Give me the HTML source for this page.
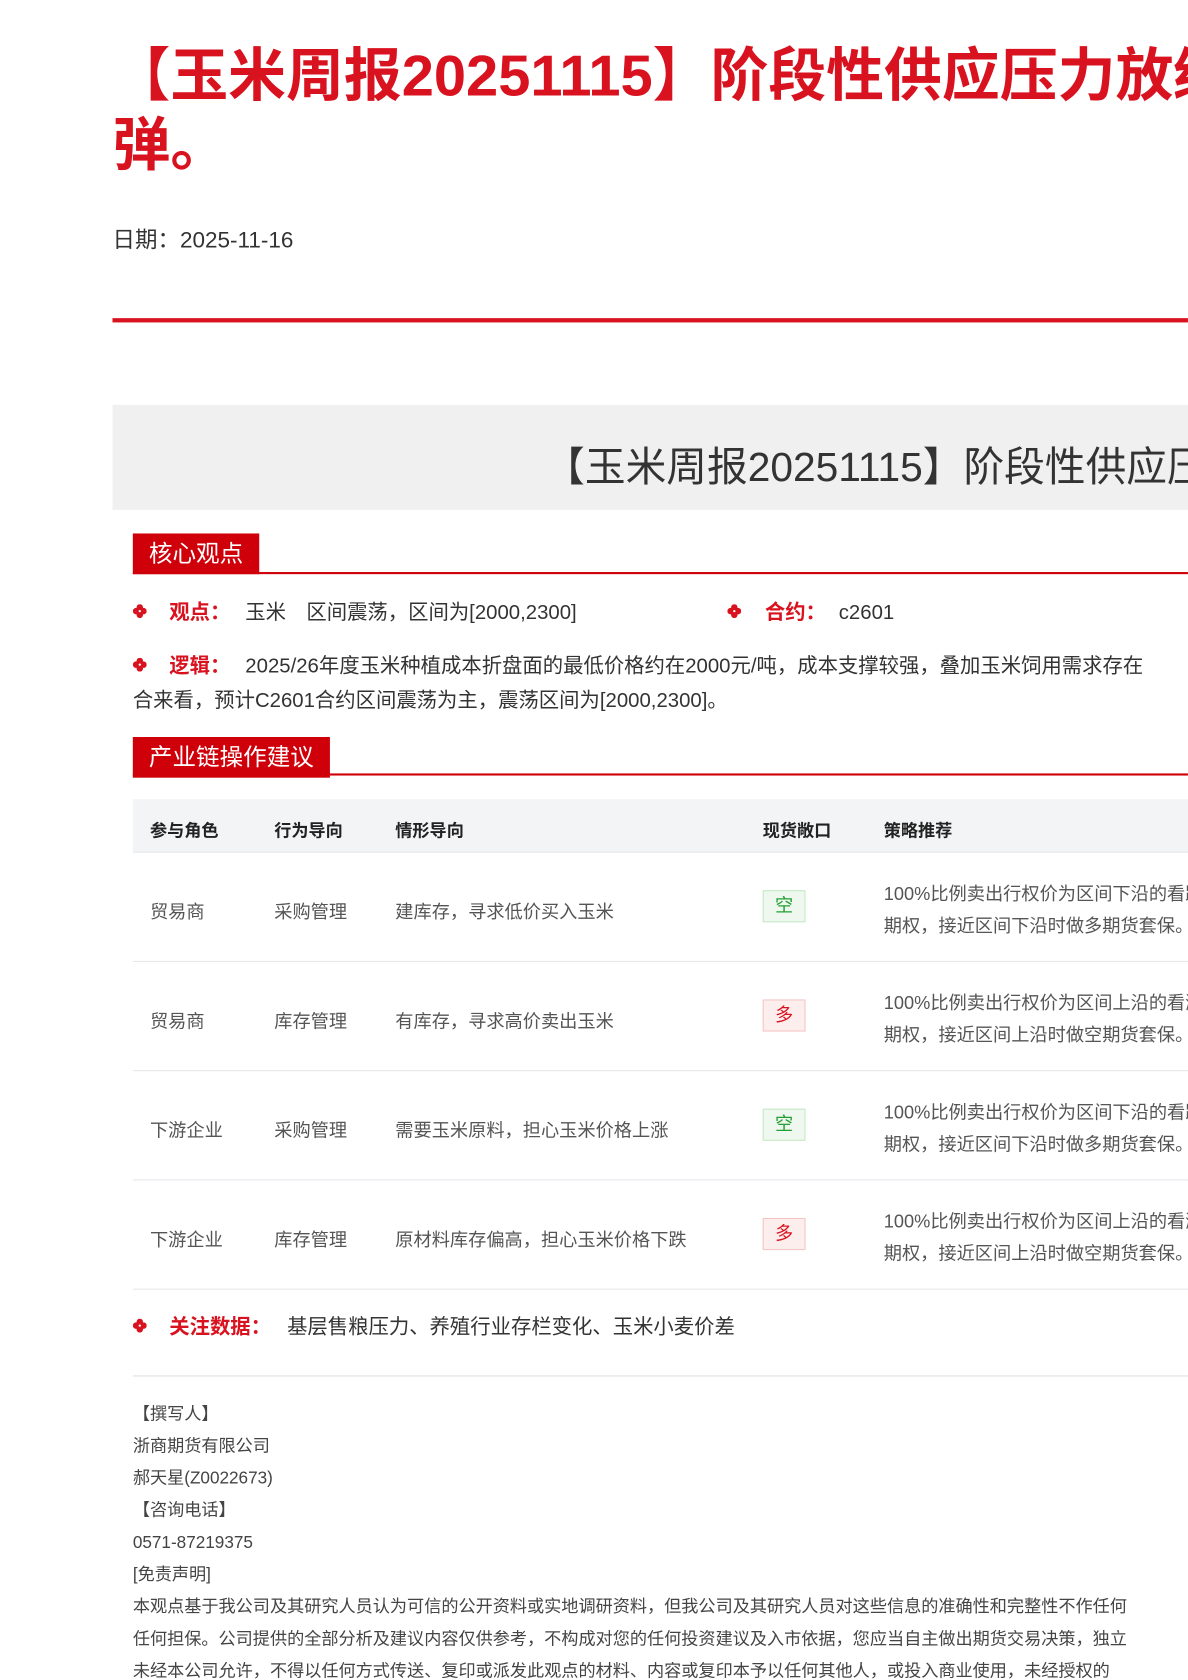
<!DOCTYPE html>
<html><head><meta charset="utf-8"><style>
*{margin:0;padding:0;box-sizing:border-box}
html,body{width:1188px;height:1680px;overflow:hidden;background:#fff}
body{font-family:"Liberation Sans","Noto Sans CJK SC",sans-serif;color:#333}
#w{position:relative;width:1109px;height:1568px;transform:scale(1.0712);transform-origin:0 0}
.a{position:absolute;white-space:nowrap}
.t{font-size:54px;font-weight:bold;color:#d9121f;line-height:72px;left:105px}
.red{color:#d9121f;font-weight:bold}
.sec{position:absolute;left:124px;height:38px;background:#d0000a;color:#fff;font-size:22px;line-height:38px;padding:0 15px}
.secl{position:absolute;left:124px;right:0;height:2px;background:#d0000a}
.b{font-size:19px;line-height:30px}
.bul{display:inline-block;width:13px;height:13px;vertical-align:1px}
.th{position:absolute;left:124px;right:0;top:746px;height:50px;background:#f3f4f6;border-bottom:1px solid #e5e7eb}
.row{position:absolute;left:124px;right:0;height:102px;border-bottom:1px solid #e5e7eb}
.c{position:absolute;font-size:17px;color:#555;white-space:nowrap}
.h{font-size:16px;font-weight:bold;color:#222}
.tag{position:absolute;left:712px;width:40px;height:30px;font-size:17px;line-height:28px;text-align:center}
.g{background:#eef8ee;border:1px solid #c6e9c6;color:#22a033}
.r{background:#fdeeee;border:1px solid #f5c5c5;color:#d9121f}
.f{font-size:16px;color:#444;line-height:30px;left:124px}
</style></head><body><div id="w">
<div class="a t" style="top:35px">【玉米周报20251115】阶段性供应压力放缓，玉米价格或将反</div>
<div class="a t" style="top:100px">弹。</div>
<div class="a" style="left:105px;top:208px;font-size:21px;color:#333">日期：2025-11-16</div>
<div style="position:absolute;left:105px;right:0;top:297px;height:4px;background:#d9121f"></div>
<div style="position:absolute;left:105px;right:0;top:378px;height:98px;background:#f0f0f0"></div>
<div class="a" style="left:508px;top:405px;font-size:38px;color:#333">【玉米周报20251115】阶段性供应压力放缓</div>

<div class="sec" style="top:498px">核心观点</div><div class="secl" style="top:534px"></div>
<svg width="0" height="0" style="position:absolute"><defs><symbol id="p" viewBox="0 0 12 12"><circle cx="6" cy="2.8" r="2.8" fill="#d9121f"/><circle cx="6" cy="9.2" r="2.8" fill="#d9121f"/><circle cx="2.8" cy="6" r="2.8" fill="#d9121f"/><circle cx="9.2" cy="6" r="2.8" fill="#d9121f"/><circle cx="6" cy="6" r="1" fill="#fff"/></symbol></defs></svg>
<div class="a b" style="left:124px;top:558px"><svg class="bul"><use href="#p"/></svg></div>
<div class="a b" style="left:158px;top:558px"><span class="red">观点：</span></div>
<div class="a b" style="left:229px;top:558px">玉米　区间震荡，区间为[2000,2300]</div>
<div class="a b" style="left:679px;top:558px"><svg class="bul"><use href="#p"/></svg></div>
<div class="a b" style="left:714px;top:558px"><span class="red">合约：</span></div>
<div class="a b" style="left:783px;top:558px">c2601</div>
<div class="a b" style="left:124px;top:608px"><svg class="bul"><use href="#p"/></svg></div>
<div class="a b" style="left:158px;top:608px"><span class="red">逻辑：</span></div>
<div class="a b" style="left:229px;top:608px">2025/26年度玉米种植成本折盘面的最低价格约在2000元/吨，成本支撑较强，叠加玉米饲用需求存在</div>
<div class="a b" style="left:124px;top:640px">合来看，预计C2601合约区间震荡为主，震荡区间为[2000,2300]。</div>

<div class="sec" style="top:688px">产业链操作建议</div><div class="secl" style="top:722px"></div>
<div class="th"></div>
<div class="c h" style="left:140px;top:762px">参与角色</div>
<div class="c h" style="left:256px;top:762px">行为导向</div>
<div class="c h" style="left:369px;top:762px">情形导向</div>
<div class="c h" style="left:712px;top:762px">现货敞口</div>
<div class="c h" style="left:825px;top:762px">策略推荐</div>

<div class="row" style="top:796px"></div>
<div class="c" style="left:140px;top:837px">贸易商</div><div class="c" style="left:256px;top:837px">采购管理</div><div class="c" style="left:369px;top:837px">建库存，寻求低价买入玉米</div>
<div class="tag g" style="top:831px">空</div>
<div class="c" style="left:825px;top:820px">100%比例卖出行权价为区间下沿的看跌</div><div class="c" style="left:825px;top:850px">期权，接近区间下沿时做多期货套保。</div>

<div class="row" style="top:898px"></div>
<div class="c" style="left:140px;top:939px">贸易商</div><div class="c" style="left:256px;top:939px">库存管理</div><div class="c" style="left:369px;top:939px">有库存，寻求高价卖出玉米</div>
<div class="tag r" style="top:933px">多</div>
<div class="c" style="left:825px;top:922px">100%比例卖出行权价为区间上沿的看涨</div><div class="c" style="left:825px;top:952px">期权，接近区间上沿时做空期货套保。</div>

<div class="row" style="top:1000px"></div>
<div class="c" style="left:140px;top:1041px">下游企业</div><div class="c" style="left:256px;top:1041px">采购管理</div><div class="c" style="left:369px;top:1041px">需要玉米原料，担心玉米价格上涨</div>
<div class="tag g" style="top:1035px">空</div>
<div class="c" style="left:825px;top:1024px">100%比例卖出行权价为区间下沿的看跌</div><div class="c" style="left:825px;top:1054px">期权，接近区间下沿时做多期货套保。</div>

<div class="row" style="top:1102px"></div>
<div class="c" style="left:140px;top:1143px">下游企业</div><div class="c" style="left:256px;top:1143px">库存管理</div><div class="c" style="left:369px;top:1143px">原材料库存偏高，担心玉米价格下跌</div>
<div class="tag r" style="top:1137px">多</div>
<div class="c" style="left:825px;top:1126px">100%比例卖出行权价为区间上沿的看涨</div><div class="c" style="left:825px;top:1156px">期权，接近区间上沿时做空期货套保。</div>

<div class="a b" style="left:124px;top:1225px"><svg class="bul"><use href="#p"/></svg></div>
<div class="a b" style="left:158px;top:1225px"><span class="red">关注数据：</span></div>
<div class="a b" style="left:268px;top:1225px">基层售粮压力、养殖行业存栏变化、玉米小麦价差</div>
<div style="position:absolute;left:124px;right:0;top:1284px;height:1px;background:#e0e0e0"></div>

<div class="a f" style="top:1306px">【撰写人】</div>
<div class="a f" style="top:1336px">浙商期货有限公司</div>
<div class="a f" style="top:1366px">郝天星(Z0022673)</div>
<div class="a f" style="top:1396px">【咨询电话】</div>
<div class="a f" style="top:1426px">0571-87219375</div>
<div class="a f" style="top:1456px">[免责声明]</div>
<div class="a f" style="top:1486px">本观点基于我公司及其研究人员认为可信的公开资料或实地调研资料，但我公司及其研究人员对这些信息的准确性和完整性不作任何</div>
<div class="a f" style="top:1516px">任何担保。公司提供的全部分析及建议内容仅供参考，不构成对您的任何投资建议及入市依据，您应当自主做出期货交易决策，独立</div>
<div class="a f" style="top:1546px">未经本公司允许，不得以任何方式传送、复印或派发此观点的材料、内容或复印本予以任何其他人，或投入商业使用，未经授权的</div>
</div></body></html>
